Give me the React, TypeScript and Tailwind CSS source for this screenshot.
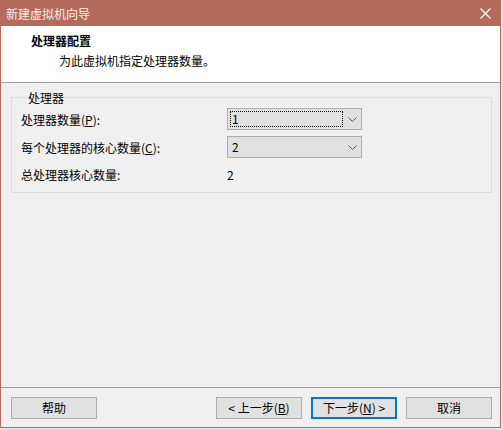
import React from "react";

const font = { fontFamily: '"Microsoft YaHei UI","Noto Sans CJK SC","Noto Sans",sans-serif' };

function Chevron() {
  return (
    <svg width="9" height="5" viewBox="0 0 9 5" className="shrink-0">
      <path d="M0.5 0.5 L4.5 4.5 L8.5 0.5" fill="none" stroke="#4d5669" strokeWidth="1" />
    </svg>
  );
}

function Combo({ value, focused }: { value: string; focused?: boolean }) {
  return (
    <div className="w-[135px] h-[22px] bg-[#e1e1e1] border border-[#adadad] flex items-center">
      <div className="flex-1 h-full p-[2px]">
        <div
          className={
            "h-full w-[113px] flex items-center pl-[1px] leading-[16px] " +
            (focused ? "border border-dotted border-black" : "border border-transparent")
          }
        >
          {value}
        </div>
      </div>
      <div className="w-[19px] flex justify-center pr-[2px]">
        <Chevron />
      </div>
    </div>
  );
}

function Btn({ children, primary }: { children: React.ReactNode; primary?: boolean }) {
  return (
    <div
      className={
        "w-[86px] h-[22px] bg-[#e1e1e1] flex items-center justify-center text-[12px] leading-[16px] text-black " +
        (primary ? "border-2 border-[#0078d7]" : "border border-[#adadad]")
      }
    >
      {children}
    </div>
  );
}

export default function App() {
  return (
    <div className="w-[503px] h-[430px] bg-[#dde3e6] text-[12px] text-black" style={font}>
      <div className="w-[501px] h-[428px] border border-[#b46b5c] bg-[#f0f0f0] flex flex-col">
        {/* Title bar */}
        <div className="h-[25px] bg-[#b46b5c] flex items-center justify-between pl-[5px] pr-[9px] text-white">
          <span className="leading-[16px] text-[12px] text-[#fbeeeb]">新建虚拟机向导</span>
          <svg width="11" height="11" viewBox="0 0 11 11">
            <path d="M0.5 0.5 L10.5 10.5 M10.5 0.5 L0.5 10.5" stroke="#fff" strokeWidth="1.1" />
          </svg>
        </div>
        {/* Header */}
        <div className="h-[57px] bg-white border-b border-[#a0a0a0] pl-[30px] pt-[6px]">
          <div className="font-bold leading-[17px]">处理器配置</div>
          <div className="pl-[28px] mt-[3px] leading-[17px]">为此虚拟机指定处理器数量。</div>
        </div>
        {/* Body */}
        <div className="flex-1 pt-[6px]">
          <fieldset className="ml-[10px] w-[481px] border border-[#dcdcdc] pl-[9px] pr-0 pt-[2px] pb-[9px] m-0">
            <legend className="ml-[6px] px-[1px] leading-[17px]">处理器</legend>
            <div className="flex flex-col">
              <div className="flex items-center h-[22px]">
                <span className="w-[206px] leading-[17px]">
                  处理器数量(<span className="underline">P</span>):
                </span>
                <Combo value="1" focused />
              </div>
              <div className="flex items-center h-[22px] mt-[6px]">
                <span className="w-[206px] leading-[17px]">
                  每个处理器的核心数量(<span className="underline">C</span>):
                </span>
                <Combo value="2" />
              </div>
              <div className="flex items-center h-[17px] mt-[8px]">
                <span className="w-[206px] leading-[17px]">总处理器核心数量:</span>
                <span className="leading-[17px]">2</span>
              </div>
            </div>
          </fieldset>
        </div>
        {/* Footer */}
        <div className="h-[40px] border-t border-[#a0a0a0] flex items-start pt-[9px] pl-[10px]">
          <Btn>帮助</Btn>
          <div className="ml-[119px] flex gap-[9px]">
            <Btn>
              &lt; 上一步(<span className="underline">B</span>)
            </Btn>
            <Btn primary>
              下一步(<span className="underline">N</span>) &gt;
            </Btn>
            <Btn>取消</Btn>
          </div>
        </div>
      </div>
    </div>
  );
}
